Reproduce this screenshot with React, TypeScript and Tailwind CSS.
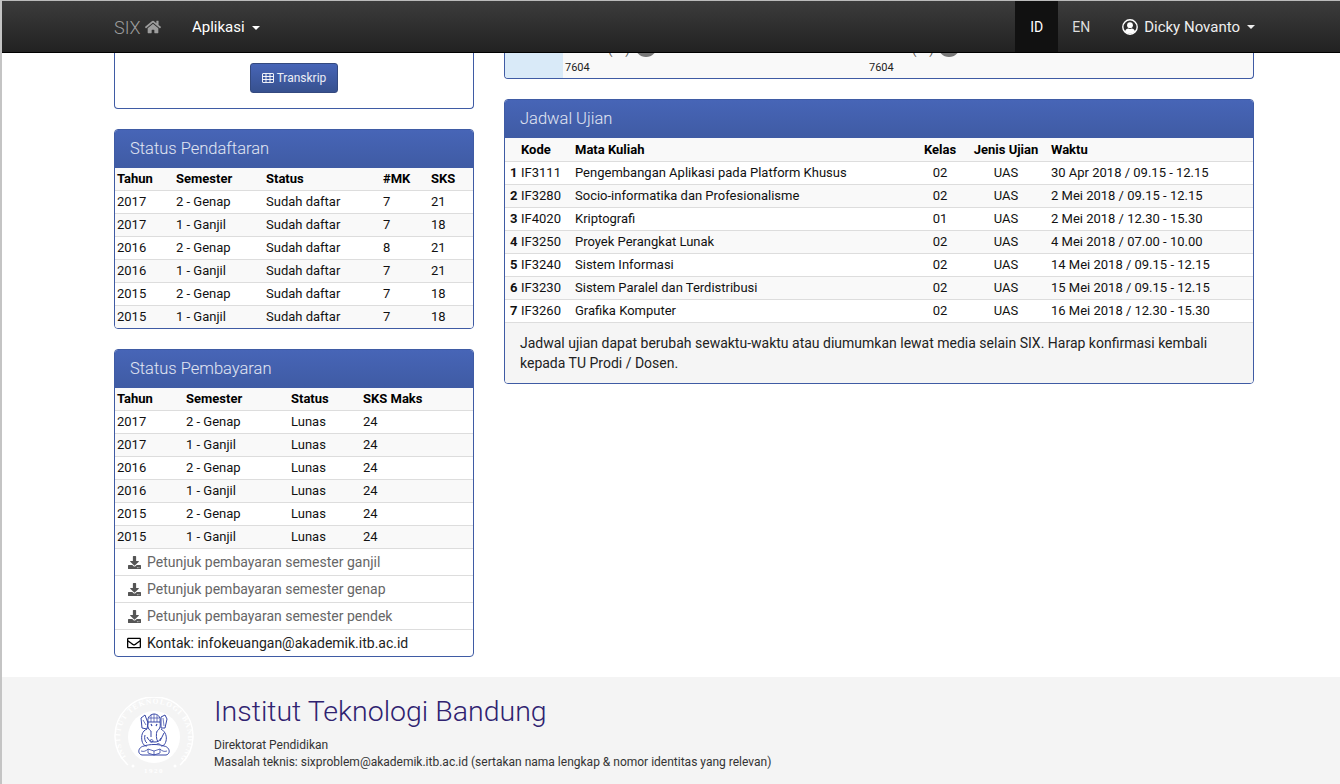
import { FaDownload, FaHome, FaRegEnvelope } from "react-icons/fa";

const pendaftaran = [
  ["2017", "2 - Genap", "Sudah daftar", "7", "21"],
  ["2017", "1 - Ganjil", "Sudah daftar", "7", "18"],
  ["2016", "2 - Genap", "Sudah daftar", "8", "21"],
  ["2016", "1 - Ganjil", "Sudah daftar", "7", "21"],
  ["2015", "2 - Genap", "Sudah daftar", "7", "18"],
  ["2015", "1 - Ganjil", "Sudah daftar", "7", "18"],
];

const pembayaran = [
  ["2017", "2 - Genap", "Lunas", "24"],
  ["2017", "1 - Ganjil", "Lunas", "24"],
  ["2016", "2 - Genap", "Lunas", "24"],
  ["2016", "1 - Ganjil", "Lunas", "24"],
  ["2015", "2 - Genap", "Lunas", "24"],
  ["2015", "1 - Ganjil", "Lunas", "24"],
];

const ujian = [
  ["1", "IF3111", "Pengembangan Aplikasi pada Platform Khusus", "02", "UAS", "30 Apr 2018 / 09.15 - 12.15"],
  ["2", "IF3280", "Socio-informatika dan Profesionalisme", "02", "UAS", "2 Mei 2018 / 09.15 - 12.15"],
  ["3", "IF4020", "Kriptografi", "01", "UAS", "2 Mei 2018 / 12.30 - 15.30"],
  ["4", "IF3250", "Proyek Perangkat Lunak", "02", "UAS", "4 Mei 2018 / 07.00 - 10.00"],
  ["5", "IF3240", "Sistem Informasi", "02", "UAS", "14 Mei 2018 / 09.15 - 12.15"],
  ["6", "IF3230", "Sistem Paralel dan Terdistribusi", "02", "UAS", "15 Mei 2018 / 09.15 - 12.15"],
  ["7", "IF3260", "Grafika Komputer", "02", "UAS", "16 Mei 2018 / 12.30 - 15.30"],
];

const petunjuk = ["ganjil", "genap", "pendek"];

function Caret() {
  return <span className="ml-[7px] inline-block border-x-4 border-t-4 border-x-transparent border-t-current align-middle" />;
}

function PanelHeading({ title }: { title: string }) {
  return (
    <div className="flex h-[38px] items-center bg-gradient-to-b from-[#4765b7] to-[#3f5ba4] px-[15px] text-[16.5px] font-light text-white/85">
      {title}
    </div>
  );
}

function Row({ index, className, children }: { index: number; className: string; children: React.ReactNode }) {
  return (
    <div className={`grid h-[23px] items-center border-t border-[#ddd] text-[13px] text-[#111] ${index % 2 === 0 ? "bg-white" : "bg-[#f9f9f9]"} ${className}`}>
      {children}
    </div>
  );
}

function UserIcon() {
  return (
    <svg viewBox="0 0 16 16" className="mr-[6px] h-[16px] w-[16px] text-white" fill="currentColor">
      <circle cx="8" cy="8" r="7.2" fill="none" stroke="currentColor" strokeWidth="1.4" />
      <circle cx="8" cy="6.2" r="2.9" />
      <path d="M2.9 12.6 C3.4 10.6 5 9.6 6.2 9.6 C7.3 10.2 8.7 10.2 9.8 9.6 C11 9.6 12.6 10.6 13.1 12.6 C11.8 14 10 14.8 8 14.8 C6 14.8 4.2 14 2.9 12.6 Z" />
    </svg>
  );
}

function Navbar() {
  return (
    <div className="flex h-[53px] shrink-0 items-center justify-between border-t border-[#bbb] border-b border-b-black bg-gradient-to-b from-[#3c3c3c] to-[#222] pl-[112px] pr-[85px] text-[14px] text-[#ddd]">
      <div className="flex items-center pt-[1px]">
        <span className="flex w-[78px] items-center gap-[4px] text-[18px] font-light text-[#9d9d9d]">
          SIX <FaHome className="h-[16px] w-[16px]" />
        </span>
        <span className="text-[15px] text-white">
          Aplikasi
          <Caret />
        </span>
      </div>
      <div className="flex h-full items-center">
        <span className="flex h-full w-[43px] items-center justify-center bg-[#111] pt-[1px] text-white">ID</span>
        <span className="flex h-full w-[46px] items-center justify-center pt-[1px]">EN</span>
        <span className="ml-[18px] flex items-center pt-[1px] text-[15px] text-[#eee]">
          <UserIcon />
          Dicky Novanto
          <Caret />
        </span>
      </div>
    </div>
  );
}

function StatusPendaftaran() {
  const cols = "grid-cols-[59px_90px_117px_48px_1fr] pl-[2px]";
  return (
    <div className="overflow-hidden rounded-[4px] border border-[#3f5ba4]">
      <PanelHeading title="Status Pendaftaran" />
      <div className={`grid h-[22px] items-center bg-[#f9f9f9] text-[13px] font-bold text-black ${cols}`}>
        <span>Tahun</span>
        <span>Semester</span>
        <span>Status</span>
        <span>#MK</span>
        <span>SKS</span>
      </div>
      {pendaftaran.map((r, i) => (
        <Row key={i} index={i} className={cols}>
          {r.map((c, j) => (
            <span key={j}>{c}</span>
          ))}
        </Row>
      ))}
    </div>
  );
}

function StatusPembayaran() {
  const cols = "grid-cols-[69px_105px_72px_1fr] pl-[2px]";
  return (
    <div className="overflow-hidden rounded-[4px] border border-[#3f5ba4]">
      <PanelHeading title="Status Pembayaran" />
      <div className={`grid h-[22px] items-center bg-[#f9f9f9] text-[13px] font-bold text-black ${cols}`}>
        <span>Tahun</span>
        <span>Semester</span>
        <span>Status</span>
        <span>SKS Maks</span>
      </div>
      {pembayaran.map((r, i) => (
        <Row key={i} index={i} className={cols}>
          {r.map((c, j) => (
            <span key={j}>{c}</span>
          ))}
        </Row>
      ))}
      {petunjuk.map((p) => (
        <div key={p} className="flex h-[27px] items-center border-t border-[#ddd] pl-[13px] text-[14px] text-[#666]">
          <FaDownload className="mr-[6px] h-[13px] w-[13px] text-[#555]" />
          Petunjuk pembayaran semester {p}
        </div>
      ))}
      <div className="flex h-[27px] items-center border-t border-[#ddd] pl-[12px] text-[14px] text-[#222]">
        <FaRegEnvelope className="mr-[6px] h-[14px] w-[14px] text-black" />
        Kontak: infokeuangan@akademik.itb.ac.id
      </div>
    </div>
  );
}

function JadwalUjian() {
  const cols = "grid-cols-[11px_54px_340px_50px_82px_1fr] pl-[5px]";
  return (
    <div className="overflow-hidden rounded-[4px] border border-[#3f5ba4]">
      <PanelHeading title="Jadwal Ujian" />
      <div className={`grid h-[23px] items-center bg-[#f9f9f9] text-[13px] font-bold text-black ${cols}`}>
        <span />
        <span>Kode</span>
        <span>Mata Kuliah</span>
        <span className="text-center">Kelas</span>
        <span className="text-center">Jenis Ujian</span>
        <span className="pl-[4px]">Waktu</span>
      </div>
      {ujian.map((r, i) => (
        <Row key={i} index={i} className={cols}>
          <span className="font-bold">{r[0]}</span>
          <span>{r[1]}</span>
          <span>{r[2]}</span>
          <span className="text-center">{r[3]}</span>
          <span className="text-center">{r[4]}</span>
          <span className="pl-[4px]">{r[5]}</span>
        </Row>
      ))}
      <div className="border-t border-[#ddd] bg-[#f5f5f5] px-[15px] pt-[10px] pb-[10px] text-[14px] leading-[20px] text-[#222]">
        Jadwal ujian dapat berubah sewaktu-waktu atau diumumkan lewat media selain SIX. Harap konfirmasi kembali kepada TU Prodi / Dosen.
      </div>
    </div>
  );
}

function TableIcon() {
  return (
    <svg viewBox="0 0 12 10" className="h-[10px] w-[12px]" fill="none" stroke="currentColor" strokeWidth="1">
      <rect x="0.5" y="0.5" width="11" height="9" rx="0.5" />
      <path d="M0.5 3.5H11.5M0.5 6.5H11.5M4 0.5V9.5M8 0.5V9.5" />
    </svg>
  );
}

function ItbLogo() {
  return (
    <svg viewBox="0 0 80 80" className="h-[80px] w-[80px] shrink-0">
      <defs>
        <path id="ring" d="M 12 60 A 34 34 0 1 1 68 60" />
      </defs>
      <path d="M 14 68 A 39 39 0 1 1 66 68" fill="none" stroke="#fff" strokeWidth="1.4" />
      <circle cx="40" cy="40" r="26" fill="#fff" />
      <text fill="#fff" fontSize="7.5" fontWeight="700" fontFamily="'Liberation Serif', serif">
        <textPath href="#ring" textLength="150">INSTITUT TEKNOLOGI BANDUNG</textPath>
      </text>
      <text x="40" y="76" fill="#fff" fontSize="7" fontWeight="700" textAnchor="middle" letterSpacing="1.5" fontFamily="'Liberation Serif', serif">
        1920
      </text>
      <circle cx="19" cy="69" r="1.5" fill="#fff" />
      <circle cx="61" cy="69" r="1.5" fill="#fff" />
      <g fill="none" stroke="#3646a6" strokeWidth="1">
        <path d="M34 25 C33 19 38 17 40 17 C43 17 47 19 46 25 Z" />
        <path d="M35 21 L45 21 M37 18 L37 25 M40 17 L40 25 M43 18 L43 25" strokeWidth="0.7" />
        <path d="M27 21 L31 18 L34 26 L33 32 L28 31 Z" />
        <path d="M47 20 L51 18 L53 22 L51 31 L47 31 Z" />
        <path d="M29 23 L32 28 M49 21 L50 29" strokeWidth="0.7" />
        <path d="M34 25 C33 30 35 33 37 34 L37 40 M46 25 C47 30 45 33 43 34 C42 37 42 42 44 45" />
        <path d="M37 27 L38 29 M43 27 L42 29" strokeWidth="1.2" />
        <path d="M33 32 C28 34 27 39 28 44 C29 48 31 49 33 49 M47 32 C52 35 53 40 52 44 C51 48 49 49 47 49" />
        <path d="M31 38 C30 41 31 45 33 46 M50 36 L46 44" />
        <path d="M33 40 C35 46 45 47 47 41" />
        <path d="M36 44 C36 42 39 42 39 44 C39 46 36 46 36 44 Z M42 48 C43 46 46 46 46 48" strokeWidth="0.8" />
        <path d="M30 49 C24 50 23 57 28 58 L52 58 C57 57 56 50 50 49 C44 47 36 47 30 49 Z" />
        <path d="M34 52 L40 54 L46 52 L46 56 L40 58 L34 56 Z M40 54 L40 58" strokeWidth="0.8" />
        <path d="M27 54 C30 55 32 54 34 52 M53 54 C50 55 48 54 46 52" strokeWidth="0.8" />
      </g>
    </svg>
  );
}

export default function App() {
  return (
    <div className="flex h-[784px] w-[1340px] flex-col overflow-hidden border-l-2 border-[#c4c4c4] bg-white font-['Roboto',sans-serif]">
      <Navbar />
      <div className="flex flex-1 gap-[30px] pl-[112px] pr-[86px]">
        <div className="flex w-[360px] flex-col gap-[20px]">
          <div className="flex h-[56px] items-start justify-center rounded-b-[4px] border border-t-0 border-[#3f5ba4] pt-[10px]">
            <button className="flex h-[30px] w-[88px] items-center justify-center gap-[3px] rounded-[3px] border border-[#34497f] bg-gradient-to-b from-[#4765b7] to-[#37518f] text-[12px] text-white/90">
              <TableIcon />
              Transkrip
            </button>
          </div>
          <StatusPendaftaran />
          <StatusPembayaran />
        </div>
        <div className="flex w-[750px] flex-col gap-[20px]">
          <div className="flex h-[26px] overflow-hidden rounded-b-[4px] border border-t-0 border-[#3f5ba4] bg-[#f9f9f9]">
            <div className="w-[58px] bg-[#d9eaf8]" />
            <div className="relative w-[304px] pl-[2px] pt-[7px] text-[11px] leading-[16px] text-[#222]">
              <span className="absolute left-[45px] top-[-11px] text-[13px] leading-[15px] text-[#555]">(&nbsp;&nbsp;&nbsp;&nbsp;)</span>
              <span className="absolute left-[72px] top-[-18px] h-[22px] w-[22px] rounded-full bg-[#777]" />
              7604
            </div>
            <div className="relative flex-1 pl-[2px] pt-[7px] text-[11px] leading-[16px] text-[#222]">
              <span className="absolute left-[45px] top-[-11px] text-[13px] leading-[15px] text-[#555]">(&nbsp;&nbsp;&nbsp;&nbsp;)</span>
              <span className="absolute left-[71px] top-[-18px] h-[22px] w-[22px] rounded-full bg-[#777]" />
              7604
            </div>
          </div>
          <JadwalUjian />
        </div>
      </div>
      <div className="flex h-[107px] shrink-0 gap-[20px] bg-[#f4f4f4] pl-[112px] pt-[20px]">
        <ItbLogo />
        <div>
          <div className="text-[28.5px] leading-[30px] font-light text-[#2f2270]">Institut Teknologi Bandung</div>
          <div className="mt-[10px] text-[12px] leading-[17px] text-[#333]">Direktorat Pendidikan</div>
          <div className="text-[12px] leading-[17px] text-[#333]">
            Masalah teknis: sixproblem@akademik.itb.ac.id (sertakan nama lengkap &amp; nomor identitas yang relevan)
          </div>
        </div>
      </div>
    </div>
  );
}
